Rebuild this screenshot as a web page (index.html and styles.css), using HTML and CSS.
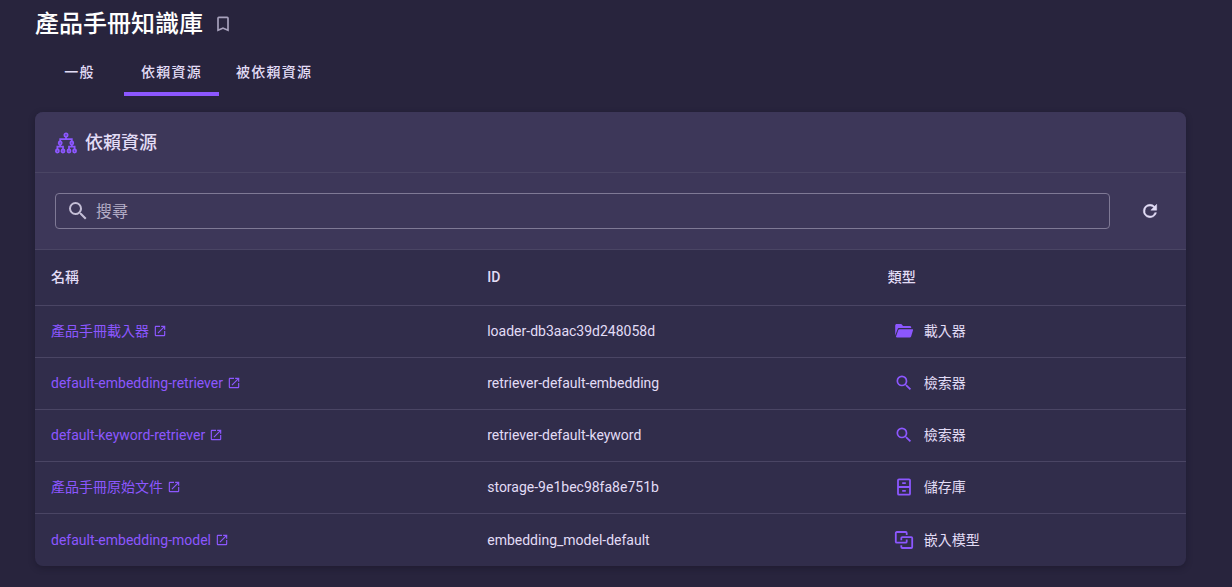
FILE: index.html
```html
<!DOCTYPE html>
<html lang="zh-Hant">
<head>
  <meta charset="UTF-8" />
  <meta name="viewport" content="width=device-width, initial-scale=1" />
  <title>產品手冊知識庫</title>
  <link rel="stylesheet" href="styles.css">
</head>
<body>
  <svg class="sprite" aria-hidden="true">
    <symbol id="i-open" viewBox="0 0 24 24">
      <path d="M14 3v2h3.59l-9.83 9.83 1.41 1.41L19 6.41V10h2V3m-2 16H5V5h7V3H5c-1.11 0-2 .9-2 2v14a2 2 0 0 0 2 2h14a2 2 0 0 0 2-2v-7h-2v7z" />
    </symbol>
    <symbol id="i-search" viewBox="0 0 24 24">
      <path d="M9.5 3A6.5 6.5 0 0 1 16 9.5c0 1.61-.59 3.09-1.56 4.23l.27.27h.79l5 5-1.5 1.5-5-5v-.79l-.27-.27A6.516 6.516 0 0 1 9.5 16 6.5 6.5 0 0 1 3 9.5 6.5 6.5 0 0 1 9.5 3m0 2C7 5 5 7 5 9.5S7 14 9.5 14 14 12 14 9.5 12 5 9.5 5z" />
    </symbol>
  </svg>

  <main class="page">
    <header class="page-header">
      <h1>產品手冊知識庫</h1>
      <button type="button" class="icon-btn bookmark" aria-label="書籤">
        <svg viewBox="0 0 24 24"><path d="M17 18l-5-2.18L7 18V5h10m0-2H7a2 2 0 0 0-2 2v16l7-3 7 3V5a2 2 0 0 0-2-2z" /></svg>
      </button>
    </header>

    <nav class="tabs">
      <a href="#general" class="tab">一般</a>
      <a href="#dependencies" class="tab active">依賴資源</a>
      <a href="#dependents" class="tab">被依賴資源</a>
    </nav>

    <section class="card">
      <div class="card-title">
        <svg class="tree-icon" viewBox="0 0 22 22">
          <circle cx="11" cy="3" r="1.6" />
          <circle cx="5.2" cy="11" r="1.5" />
          <circle cx="16.8" cy="11" r="1.5" />
          <circle cx="2.4" cy="19" r="1.5" />
          <circle cx="8" cy="19" r="1.5" />
          <circle cx="14" cy="19" r="1.5" />
          <circle cx="19.6" cy="19" r="1.5" />
          <path d="M11 4.8v2.4M5.2 9.4V7.2h11.6v2.2M5.2 12.6v2M2.4 17.4v-2.8H8v2.8M16.8 12.6v2M14 17.4v-2.8h5.6v2.8" />
        </svg>
        <h2>依賴資源</h2>
      </div>

      <div class="toolbar">
        <label class="search">
          <svg><use href="#i-search" /></svg>
          <input type="text" placeholder="搜尋" aria-label="搜尋" />
        </label>
        <button type="button" class="icon-btn refresh" aria-label="重新整理">
          <svg viewBox="0 0 24 24"><path d="M17.65 6.35A7.958 7.958 0 0 0 12 4a8 8 0 1 0 7.73 10h-2.08A6 6 0 1 1 12 6c1.66 0 3.14.69 4.22 1.78L13 11h7V4l-2.35 2.35z" /></svg>
        </button>
      </div>

      <table class="resources">
        <thead>
          <tr>
            <th class="col-name">名稱</th>
            <th class="col-id">ID</th>
            <th>類型</th>
          </tr>
        </thead>
        <tbody>
          <tr>
            <td><a href="#loader">產品手冊載入器<svg><use href="#i-open" /></svg></a></td>
            <td>loader-db3aac39d248058d</td>
            <td>
              <div class="type">
                <svg class="folder" viewBox="0 0 20 20">
                  <path d="M1.2 14.6V4.6c0-.9.6-1.5 1.5-1.5h4.6l1.8 1.8h6.6c.9 0 1.5.6 1.5 1.4v.8H5.3c-.9 0-1.5.5-1.8 1.3z" />
                  <path d="M5.6 8.2h12.7c.6 0 .9.4.7 1l-1.9 6.2c-.2.7-.7 1.1-1.4 1.1H2.6c-.5 0-.8-.4-.6-.9l2.3-6.5c.2-.6.7-.9 1.3-.9z" />
                </svg>
                <span>載入器</span>
              </div>
            </td>
          </tr>
          <tr>
            <td><a href="#embedding-retriever">default-embedding-retriever<svg><use href="#i-open" /></svg></a></td>
            <td>retriever-default-embedding</td>
            <td><div class="type"><svg><use href="#i-search" /></svg><span>檢索器</span></div></td>
          </tr>
          <tr>
            <td><a href="#keyword-retriever">default-keyword-retriever<svg><use href="#i-open" /></svg></a></td>
            <td>retriever-default-keyword</td>
            <td><div class="type"><svg><use href="#i-search" /></svg><span>檢索器</span></div></td>
          </tr>
          <tr>
            <td><a href="#storage">產品手冊原始文件<svg><use href="#i-open" /></svg></a></td>
            <td>storage-9e1bec98fa8e751b</td>
            <td>
              <div class="type">
                <svg class="line" viewBox="0 0 20 20">
                  <rect x="4" y="2.3" width="12" height="15.4" rx="1" />
                  <path d="M4 10h12M8.2 6.2h3.6M8.2 13.8h3.6" />
                </svg>
                <span>儲存庫</span>
              </div>
            </td>
          </tr>
          <tr>
            <td><a href="#embedding-model">default-embedding-model<svg><use href="#i-open" /></svg></a></td>
            <td>embedding_model-default</td>
            <td>
              <div class="type">
                <svg class="line" viewBox="0 0 20 20">
                  <path d="M12.7 5V3a1 1 0 0 0-1-1H2.8a1 1 0 0 0-1 1v8.7a1 1 0 0 0 1 1h8.9a1 1 0 0 0 1-1V9.5" />
                  <path d="M7.3 10.3V8.1a1 1 0 0 1 1-1h8.9a1 1 0 0 1 1 1V17a1 1 0 0 1-1 1H8.3a1 1 0 0 1-1-1v-1.8" />
                </svg>
                <span>嵌入模型</span>
              </div>
            </td>
          </tr>
        </tbody>
      </table>
    </section>
  </main>
</body>
</html>
```
FILE: styles.css
```css
* {
  box-sizing: border-box;
}

body {
  margin: 0;
  background: #28243d;
  color: #e2dcf6;
  font-family: Roboto, "Noto Sans CJK TC", sans-serif;
  font-size: 14px;
  line-height: 20px;
}

.sprite {
  display: none;
}

svg {
  fill: currentColor;
}

.page {
  padding: 8px 46px 20px 35px;
}

.page-header {
  display: flex;
  align-items: center;
  gap: 10px;
}

h1 {
  margin: 0;
  color: #fff;
  font-size: 24px;
  font-weight: 500;
  line-height: 32px;
}

.icon-btn {
  display: flex;
  padding: 0;
  border: none;
  background: none;
  color: inherit;
  cursor: pointer;
}

.bookmark {
  color: #a8a2bd;
}

.bookmark svg {
  width: 20px;
  height: 20px;
}

/* tabs */
.tabs {
  display: flex;
  margin-top: 8px;
}

.tab {
  min-width: 89px;
  padding: 14px 17px 10px;
  border-bottom: 4px solid transparent;
  color: inherit;
  font-weight: 500;
  letter-spacing: 1.25px;
  text-align: center;
  text-decoration: none;
}

.tab.active {
  border-bottom-color: #8c57ff;
}

/* card */
.card {
  margin-top: 16px;
  border-radius: 8px;
  background: #312d4b;
  overflow: hidden;
  box-shadow: 0 2px 6px rgba(19, 17, 32, 0.4);
}

.card-title {
  display: flex;
  align-items: center;
  gap: 8px;
  padding: 17px 20px 15px;
  border-bottom: 1px solid #4a4564;
  background: #3d3759;
}

.tree-icon {
  width: 22px;
  height: 22px;
  fill: none;
  stroke: #8c57ff;
  stroke-width: 1.8;
}

h2 {
  margin: 0;
  font-size: 18px;
  font-weight: 500;
  line-height: 28px;
}

.toolbar {
  display: flex;
  align-items: center;
  gap: 30px;
  padding: 20px 26px 20px 20px;
  border-bottom: 1px solid #4a4564;
  background: #3d3759;
}

.search {
  display: flex;
  flex: 1;
  align-items: center;
  gap: 6px;
  height: 36px;
  padding: 0 10px;
  border: 1px solid #7f7995;
  border-radius: 4px;
  color: #c4bed6;
}

.search svg {
  width: 24px;
  height: 24px;
}

.search input {
  flex: 1;
  padding: 0;
  border: none;
  outline: none;
  background: none;
  color: #e2dcf6;
  font-family: inherit;
  font-size: 16px;
}

.search input::placeholder {
  color: #b3adc6;
}

.refresh svg {
  width: 20px;
  height: 20px;
  stroke: currentColor;
  stroke-width: 0.6;
}

/* table */
.resources {
  width: 100%;
  border-collapse: collapse;
  table-layout: fixed;
}

.col-name {
  width: 37.9%;
}

.col-id {
  width: 34.8%;
}

th,
td {
  height: 52px;
  padding: 0 16px;
  text-align: left;
}

th {
  height: 55px;
  font-weight: 500;
}

tbody tr {
  border-top: 1px solid #4a4564;
}

tbody tr:last-child td {
  height: 53px;
}

td a {
  display: inline-flex;
  align-items: center;
  gap: 4px;
  color: #8c57ff;
  text-decoration: none;
}

td a svg {
  width: 14px;
  height: 14px;
}

.type {
  display: flex;
  align-items: center;
  gap: 10px;
  padding-left: 6px;
}

.type svg {
  width: 20px;
  height: 20px;
  color: #8c57ff;
}

.type .line {
  fill: none;
  stroke: currentColor;
  stroke-width: 1.8;
}
```
